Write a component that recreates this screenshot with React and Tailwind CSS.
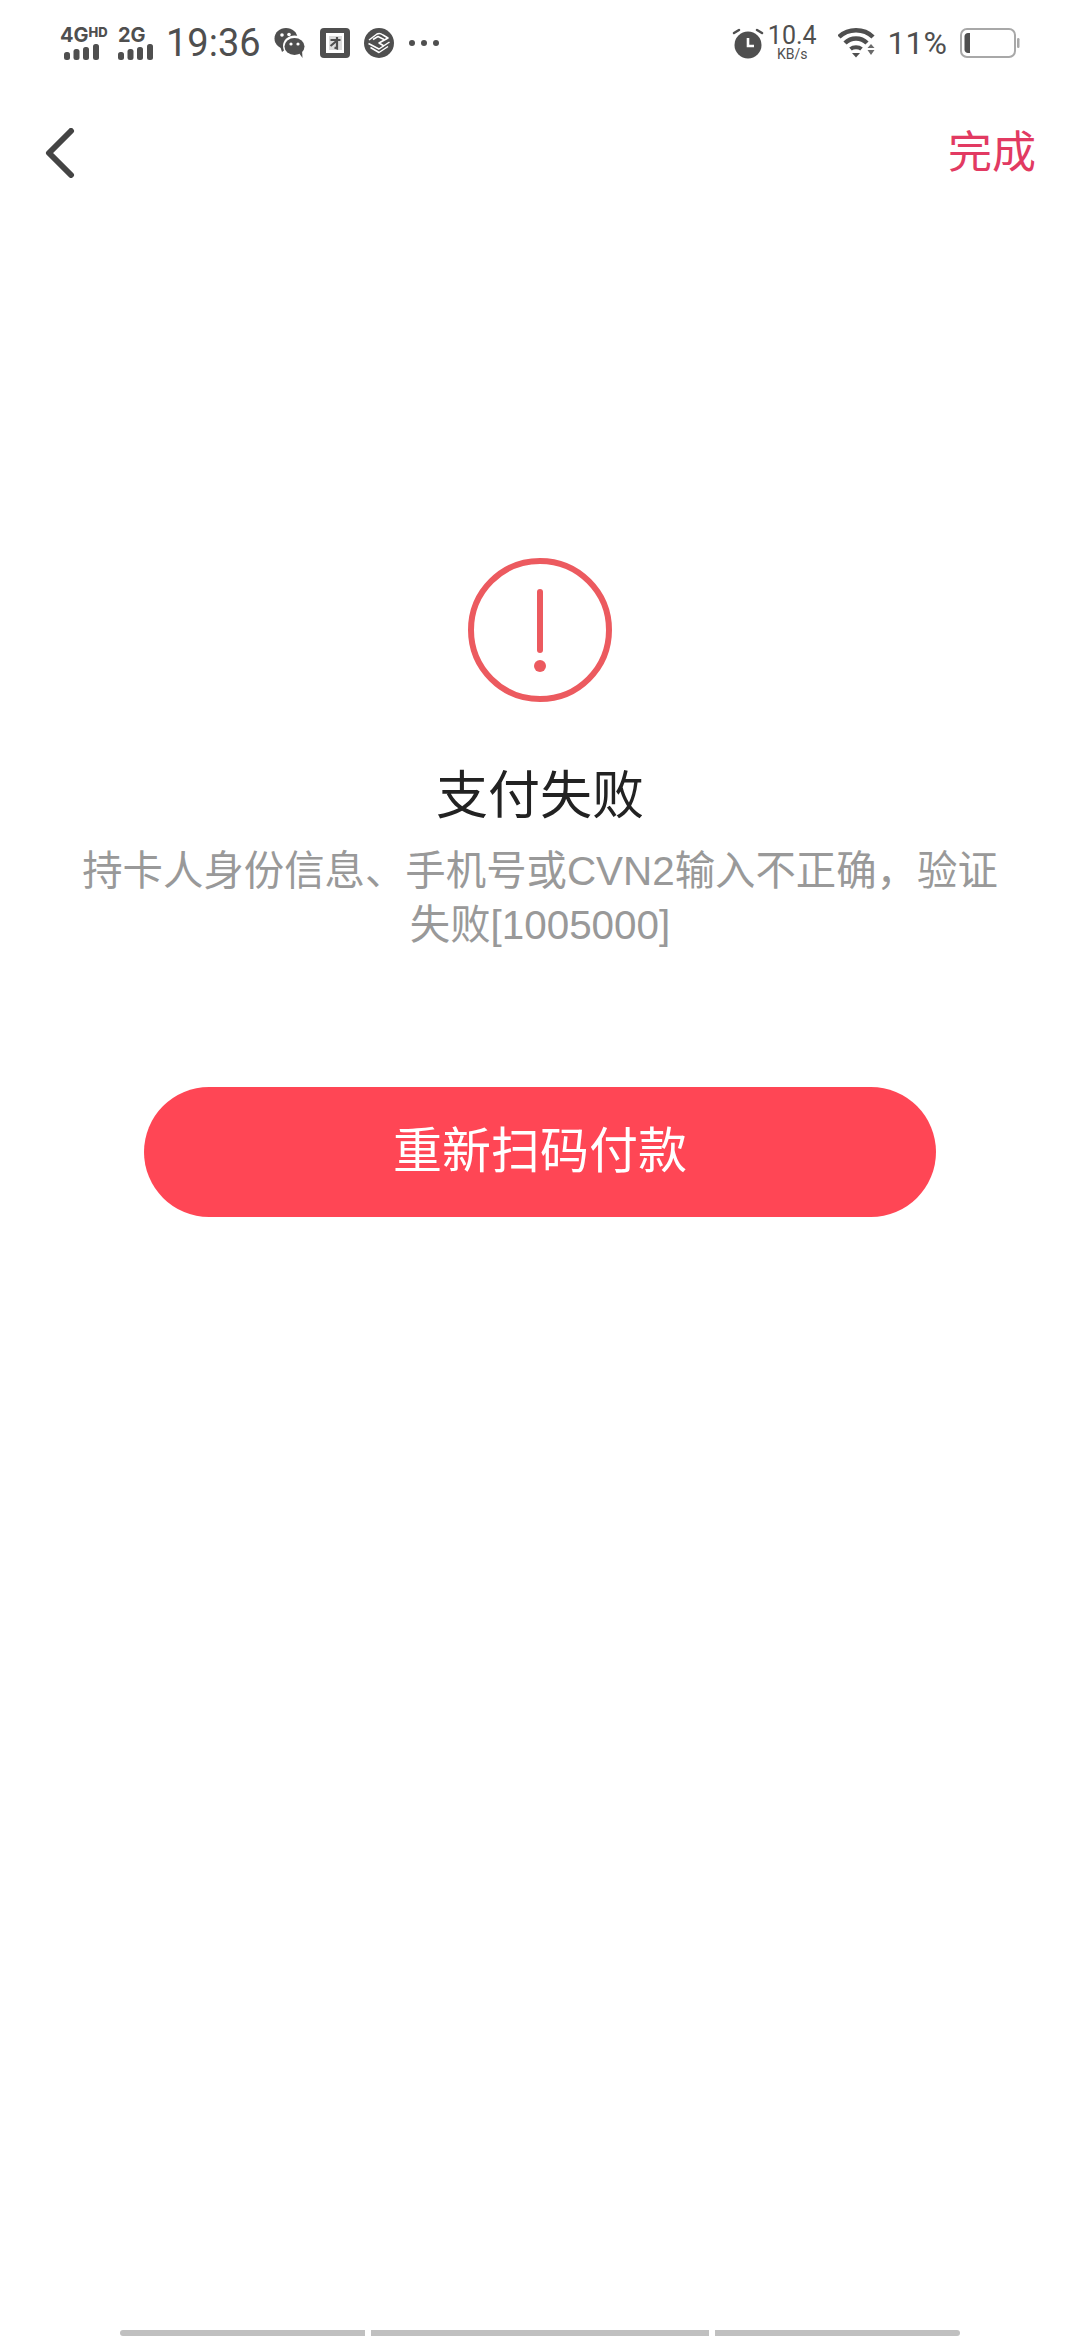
import React from 'react';

const Bars = ({ className }) => (
    <svg className={className} width="35" height="16" viewBox="0 0 35 16" fill="#4f4f4f">
        <rect x="0" y="8" width="6" height="8" rx="2.5" />
        <rect x="9.500" y="5" width="6" height="11" rx="2.5" />
        <rect x="19" y="3" width="6" height="13" rx="2.5" />
        <rect x="29" y="0" width="6" height="16" rx="2.5" />
    </svg>
);

const WeChatIcon = () => (
    <svg width="32" height="32" viewBox="0 0 32 32">
        <ellipse cx="12" cy="11.500" rx="11.500" ry="10.500" fill="#4f4f4f" />
        <path d="M6 19 L8 25 L13 21 Z" fill="#4f4f4f" />
        <ellipse cx="20.500" cy="19" rx="11.500" ry="10.500" fill="#fff" />
        <ellipse cx="20.500" cy="19.500" rx="10" ry="8.500" fill="#4f4f4f" />
        <path d="M25 26 L28.500 31 L28 23 Z" fill="#4f4f4f" />
        <circle cx="8" cy="8" r="1.800" fill="#fff" />
        <circle cx="15" cy="7.500" r="1.800" fill="#fff" />
        <circle cx="17" cy="17" r="1.600" fill="#fff" />
        <circle cx="24" cy="17" r="1.600" fill="#fff" />
    </svg>
);

const CardIcon = () => (
    <svg width="30" height="30" viewBox="0 0 30 30">
        <rect width="30" height="30" rx="4" fill="#4f4f4f" />
        <rect x="6" y="5" width="18" height="20" fill="#fff" />
        <rect x="9" y="8" width="13" height="14" fill="#dcdcdc" />
        <path d="M10.500 12 H20.500 M17 9 V20.500 L14.500 19.500 M16.500 13 L10.500 18" stroke="#4f4f4f" strokeWidth="2.200" fill="none" />
    </svg>
);

const MobileIcon = () => (
    <svg width="30" height="30" viewBox="0 0 30 30">
        <circle cx="15" cy="15" r="15" fill="#4f4f4f" />
        <g fill="none" stroke="#fff" strokeWidth="1.500" strokeLinejoin="round">
            <path d="M5 12 L13 6 C15 5 17 5.500 19 7 L24 10 L15 15 L20 18" />
            <path d="M4.500 15.500 L15 21 L25.500 14" />
            <path d="M6.500 19.500 L15 24.500 L24 18.500" />
            <path d="M9 11.500 L14 8.500 L20 11.500" />
        </g>
    </svg>
);

const AlarmIcon = () => (
    <svg width="32" height="32" viewBox="0 0 32 32">
        <circle cx="16" cy="18" r="13.500" fill="#4f4f4f" />
        <path d="M16 11 V19 H22" fill="none" stroke="#fff" strokeWidth="2.600" />
        <path d="M2 6 L7 3 M30 6 L25 3" stroke="#4f4f4f" strokeWidth="2.500" strokeLinecap="round" />
    </svg>
);

const WifiIcon = () => (
    <svg width="40" height="30" viewBox="0 0 40 30">
        <path d="M1 9 C10 0 26 0 35 9" fill="none" stroke="#4f4f4f" strokeWidth="4.500" />
        <path d="M7 15 C13 9 23 9 29 15" fill="none" stroke="#4f4f4f" strokeWidth="4.500" />
        <path d="M12.500 21 C15.500 18.500 20.500 18.500 23.500 21" fill="none" stroke="#4f4f4f" strokeWidth="4" />
        <path d="M14 25 L22 25 L18 29.500 Z" fill="#4f4f4f" />
        <path d="M33 16 L36.500 20 H29.500 Z M29.500 22 H36.500 L33 27 Z" fill="#6a6a6a" />
    </svg>
);

const BatteryIcon = () => (
    <svg width="60" height="30" viewBox="0 0 60 30">
        <rect x="1" y="1" width="54" height="28" rx="6" fill="#fff" stroke="#a8a8a8" strokeWidth="2" />
        <path d="M10 5 H8 C6 5 4.500 6.500 4.500 8.500 V21.500 C4.500 23.500 6 25 8 25 H10 Z" fill="#4f4f4f" />
        <rect x="57" y="10" width="2.500" height="10" rx="1.200" fill="#a8a8a8" />
    </svg>
);

const App = () => {
    return (
        <div className="flex flex-col min-h-[2340px] bg-white font-['Liberation_Sans','Noto_Sans_CJK_SC',sans-serif]">
            {/* status bar */}
            <div className="flex items-center justify-between h-[86px] pl-[60px] pr-[60px] text-[#4f4f4f]">
                <div className="flex items-center">
                    <div className="flex flex-col w-[46px]">
                        <div className="flex items-start h-[16px] font-['Inter',sans-serif] font-bold">
                            <span className="text-[20px] leading-[16px]">4G</span>
                            <span className="text-[13px] leading-[11px] font-extrabold">HD</span>
                        </div>
                        <Bars className="ml-[4px] mt-[1px]" />
                    </div>
                    <div className="flex flex-col w-[35px] ml-[12px]">
                        <span className="h-[16px] text-[20px] leading-[16px] font-bold font-['Inter',sans-serif]">2G</span>
                        <Bars className="mt-[1px]" />
                    </div>
                    <span className="ml-[13px] text-[38px] leading-none font-['Roboto',sans-serif]">19:36</span>
                    <div className="ml-[13px] flex items-center gap-[14px]">
                        <WeChatIcon />
                        <CardIcon />
                        <MobileIcon />
                    </div>
                    <div className="ml-[15px] flex gap-[6px]">
                        <span className="w-[6px] h-[6px] rounded-full bg-[#4f4f4f]" />
                        <span className="w-[6px] h-[6px] rounded-full bg-[#4f4f4f]" />
                        <span className="w-[6px] h-[6px] rounded-full bg-[#4f4f4f]" />
                    </div>
                </div>
                <div className="flex items-center">
                    <AlarmIcon />
                    <div className="flex flex-col items-center ml-[4px] font-['Roboto',sans-serif]">
                        <span className="text-[25px] leading-[22px]">10.4</span>
                        <span className="text-[14px] leading-[14px]">KB/s</span>
                    </div>
                    <div className="ml-[21px]"><WifiIcon /></div>
                    <span className="ml-[10px] text-[32px] leading-none font-['Roboto',sans-serif]">11%</span>
                    <div className="ml-[13px]"><BatteryIcon /></div>
                </div>
            </div>

            {/* nav */}
            <div className="flex items-center justify-between h-[68px] mt-[33px] pl-[44px] pr-[44px]">
                <svg width="32" height="50" viewBox="0 0 32 50" fill="none">
                    <path d="M27 3 L5 25 L27 47" stroke="#444444" strokeWidth="6" strokeLinecap="round" strokeLinejoin="round" />
                </svg>
                <span className="text-[44px] leading-none text-[#e23a62]">完成</span>
            </div>

            {/* result */}
            <div className="flex flex-col items-center mt-[371px]">
                <svg width="144" height="144" viewBox="0 0 144 144" fill="none">
                    <circle cx="72" cy="72" r="69" stroke="#ec5a5f" strokeWidth="6" />
                    <path d="M72 34 V92" stroke="#ec5a5f" strokeWidth="6" strokeLinecap="round" />
                    <circle cx="72" cy="108" r="6" fill="#ec5a5f" />
                </svg>
                <h1 className="mt-[65px] text-[52px] leading-[58px] font-normal text-[#222222]">支付失败</h1>
                <p className="mt-[19px] w-[940px] text-center text-[40.4px] leading-[54px] text-[#999999]">
                    持卡人身份信息、手机号或CVN2输入不正确，验证失败[1005000]
                </p>
                <button className="mt-[135px] w-[792px] h-[130px] rounded-full bg-[#ff4655] text-white text-[49px]">
                    重新扫码付款
                </button>
            </div>

            {/* home indicator */}
            <div className="mt-auto mb-[4px] flex justify-center gap-[6px]">
                <div className="w-[245px] h-[6px] rounded-l-full bg-[#c0c0c0]" />
                <div className="w-[338px] h-[6px] bg-[#c0c0c0]" />
                <div className="w-[245px] h-[6px] rounded-r-full bg-[#c0c0c0]" />
            </div>
        </div>
    );
};

export default App;
